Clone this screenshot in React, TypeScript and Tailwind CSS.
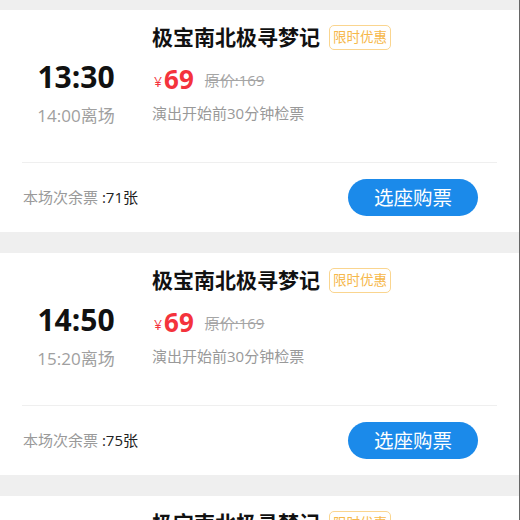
const font = { fontFamily: '"Open Sans", "Noto Sans CJK SC", sans-serif' };

const sessions = [
  { start: "13:30", end: "14:00", left: 71 },
  { start: "14:50", end: "15:20", left: 75 },
  { start: "16:10", end: "16:40", left: 80 },
];

function SessionCard({ start, end, left }: { start: string; end: string; left: number }) {
  return (
    <div className="h-[222px] shrink-0 bg-white">
      <div className="flex h-[152px]">
        <div className="flex w-[152px] shrink-0 flex-col items-center pt-[49px]">
          <div className="text-[30px] font-bold leading-[36px] text-[#111]">{start}</div>
          <div className="mt-[10px] text-[17px] leading-[22px] text-[#a0a0a0]">{end}离场</div>
        </div>
        <div className="flex flex-col pt-[13px]">
          <div className="flex h-[28px] items-center">
            <span className="text-[21px] font-bold leading-[28px] text-[#111]">极宝南北极寻梦记</span>
            <span className="ml-[9px] flex h-[25px] items-center rounded-[5px] border border-[#fad58f] px-[3px] text-[13.5px] text-[#f6b84a]">
              限时优惠
            </span>
          </div>
          <div className="mt-[12px] flex h-[32px] items-center">
            <span className="ml-[2px] mt-[4px] text-[14px] text-[#f4333c]">¥</span>
            <span className="ml-[2px] text-[26px] font-bold leading-[32px] text-[#f4333c]">69</span>
            <span className="ml-[11px] mt-[3px] text-[15px] text-[#a5a5a5] line-through">原价:169</span>
          </div>
          <div className="mt-[8px] text-[15px] leading-[20px] text-[#999]">演出开始前30分钟检票</div>
        </div>
      </div>
      <div className="mx-[22px] h-px bg-[#efefef]" />
      <div className="flex h-[69px] items-center justify-between pl-[23px] pr-[41px]">
        <div className="text-[15px]">
          <span className="text-[#9a9a9a]">本场次余票 </span>
          <span className="text-[#222]">:{left}张</span>
        </div>
        <button className="flex h-[37px] w-[130px] items-center justify-center rounded-full bg-[#1b8aea] text-[19.5px] text-white">
          选座购票
        </button>
      </div>
    </div>
  );
}

export default function App() {
  return (
    <div style={font} className="flex h-[520px] w-[520px] flex-col gap-[21px] overflow-hidden border-r border-[#666] bg-[#efefef] pt-[10px]">
      {sessions.map((s) => (
        <SessionCard key={s.start} {...s} />
      ))}
    </div>
  );
}
